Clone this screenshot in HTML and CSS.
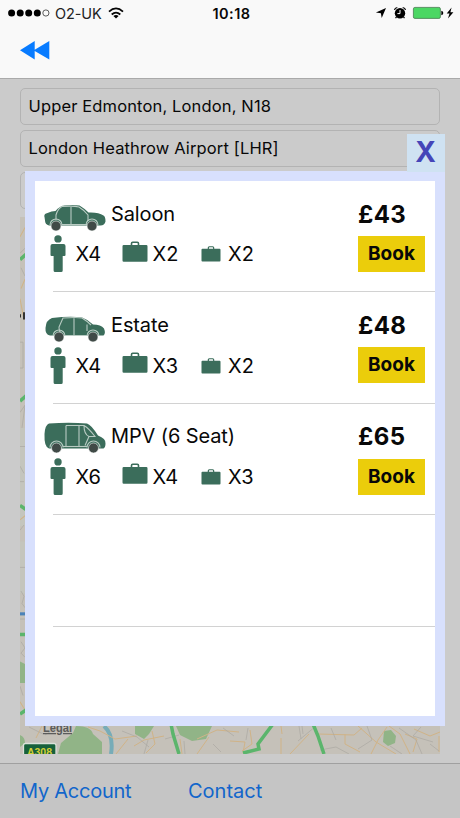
FILE: index.html
```html
<!DOCTYPE html>
<html lang="en">
<head>
<meta charset="utf-8">
<title>Choose a car</title>
<link rel="stylesheet" href="styles.css">
</head>
<body>
<svg class="defs" aria-hidden="true">
  <symbol id="person" viewBox="0 0 16 38">
    <circle cx="8" cy="3.900" r="3.700"/>
    <path d="M2.500 9h11q2 0 2 2v9q0 1-1 1h-1.800v14.500q0 1.500-1.500 1.500H5.100q-1.500 0-1.500-1.500V21H1.500q-1 0-1-1v-9q0-2 2-2z"/>
  </symbol>
  <symbol id="case" viewBox="0 0 26 23">
    <path fill-rule="evenodd" d="M1.700 5h7V3.500q0-2 2-2h4.600q2 0 2 2V5h7q1.200 0 1.200 1.200v14.300q0 1.200-1.200 1.200H1.700q-1.200 0-1.200-1.200V6.200Q.500 5 1.700 5zM10.300 5h5.400V3.600q0-.6-.6-.6h-4.200q-.6 0-.6.600z"/>
  </symbol>
</svg>
<header class="top">
  <div class="status">
    <div class="carrier">
      <svg width="42" height="10" viewBox="0 0 42 10"><g><circle cx="3.600" cy="5" r="3.500"/><circle cx="12.200" cy="5" r="3.500"/><circle cx="20.700" cy="5" r="3.500"/><circle cx="29.300" cy="5" r="3.500"/><circle cx="37.900" cy="5" r="3.100" fill="none" stroke="#333" stroke-width=".8"/></g></svg>
      <span class="network">O2-UK</span>
      <svg class="wifi" width="16" height="12" viewBox="0 0 16 12"><g fill="none" stroke="#050505" stroke-width="1.800"><path d="M1 4.600Q8-1.800 15 4.600"/><path d="M3.700 7.500Q8 3.700 12.300 7.500"/></g><path d="M5.400 9Q8 7 10.600 9L8 11.600z"/></svg>
    </div>
    <span class="time">10:18</span>
    <svg class="indicators" width="80" height="16" viewBox="375 5 80 16">
      <path d="M386 8l-4.300 10-.8-4.800-5-.8z"/>
      <circle cx="400" cy="13.300" r="5.200"/><path d="M394.500 10q.3-2 2.800-2.500M405.500 10q-.3-2-2.800-2.500M396.500 17l-1 1.200M403.500 17l1 1.200" fill="none" stroke="#050505" stroke-width="1.200"/><path d="M400 10v3.600h-2.600" fill="none" stroke="#fff" stroke-width="1"/>
      <rect x="413.400" y="7.400" width="27" height="11" rx="1.500" fill="#4bd763" stroke="#477c50" stroke-width=".8"/><path d="M441.300 10.800q2 .4 2 2.200t-2 2.200z"/>
      <path d="M451.600 7.500l-4.900 6h2.800l-1.500 5 5.400-6.300h-3z"/>
    </svg>
  </div>
  <svg class="back" width="31" height="20" viewBox="0 0 31 20"><path d="M0 10.300L14.700 1v8.700L29.300 1v18.600L14.700 10.900v8.700z" fill="#087bff"/></svg>
</header>
<main class="content">
  <div class="fields">
    <div class="field">Upper Edmonton, London, N18</div>
    <div class="field">London Heathrow Airport [LHR]</div>
    <div class="field"></div>
  </div>
  <svg class="map" width="420" height="537" viewBox="20 217 420 537">
    <rect x="20" y="217" width="420" height="537" fill="#c5c1b9"/>
    <g transform="matrix(1 0 0 1.033 0 -5.94)">
      <path d="M20 420h6v95h-6zM20 530h6v50h-6z" fill="#c4c5bd"/>
      <path d="M20 646l6 3v18h-6z" fill="#91b487"/>
      <path d="M20 235l5-9M21 285l4-9M20 295l4 20M20 509l5-4M20 685l5 8" fill="none" stroke="#d0b387"/>
      <path d="M20 251l5-5M21 265l4 8M20 337h3v25h-3M20 405l5-7-3 22M20 438h5M20 457l4 7M20 472h4M20 519l4-5M20 555h5M21 578l3 5-2 7 3 4M20 605h5M21 627l4 6-4 5 4 4M20 670l3 9" fill="none" stroke="#aaa7a2" stroke-width=".7"/>
      <path d="M20 257l6-5M20 394l6-5M20 495l6 4M20 620h6M20 697l6-4" fill="none" stroke="#5bb56c" stroke-width="3.500"/>
      <path d="M20 600h6" stroke="#4b82b9" stroke-width="3"/><path d="M23 308h3v7h-3zM20 310h1v3h-1z" fill="#333"/>
    </g>
    <path d="M20 735q5 2 5 8l-5 4zM61 743l12-10 3-7q15 0 17 8l9 8v12H58zM135 726h19l-5 8-5 5-9-5zM176 726h36l-6 13-14 2-12-6zM384 731l7-1 5 6-1 7-7 3-5-4z" fill="#91b487"/>
    <path d="M104 726q10 9 7 28" fill="none" stroke="#77acb8" stroke-width="4"/>
    <path d="M42 726l-6 12M88 727l12 4 15 8 22-3M116 754l12-15M134 746l10-6 20-4M152 731l3 13-9 9M180 739l2 15M197 739l20-9 22 2M197 754l12-17M230 741l15 1-2 11M250 730l2 14-10 7M281 754v-16M281 726l1 8M290 754l19-20M318 734l36 1 8-7M345 734v10l15 8M358 726l18 16 20 12M371 754l7-14 9-13M389 726l11 8 10 20M405 734l12 5-4 13M414 729l16 7 10-4M439 736v16" fill="none" stroke="#d0b387" stroke-width="1"/>
    <path d="M29 727l14 7M45 735l14-9M122 731l15 6 12 10M144 754l4-14M165 739l14-4M185 754l-1-13M213 744l8 8M223 728l11 8M248 728l-2 12M298 741l18-15M299 726l2 13M302 726l1 8M320 750l16-3 13 7M336 740l-5-12M367 726l5 14-14 9M390 746l12 8M399 728l17 12 6 14M421 727l-8 9 20 6M430 744l9 7" fill="none" stroke="#aaa7a2" stroke-width=".7"/>
    <path d="M171 724l2 10 6 20M273 724l-15 20 1 5-12 3-4 1M313 724l5 12 6 18" fill="none" stroke="#5bb56c" stroke-width="3.500"/>
    <text x="43" y="732" class="legal" textLength="29" lengthAdjust="spacingAndGlyphs">Legal</text>
    <rect x="23.500" y="743.500" width="32.500" height="15" rx="2" fill="#17613b" stroke="#dae1d9" stroke-width="1.300"/><text x="27" y="755.500" class="road" textLength="25" lengthAdjust="spacingAndGlyphs">A308</text>
  </svg>
</main>
<footer class="toolbar"><span class="account">My Account</span><span>Contact</span></footer>
<section class="modal">
  <div class="close">X</div>
  <div class="ride">
    <div class="details">
      <div class="vehicle">
        <svg width="62" height="28" viewBox="0 0 62 28"><path d="M.500 13q-1-3 3-4 4-2 8-2 4-5 9-5.500 8-1 15 0 5 3 9 7 10-.5 15 3 2 1 2 6-1 4-5 4H5q-4-1-4-5z"/><path class="trim" d="M12 16V11q2-7 7-9M18 2.500q11-1 17 .5 5 3 9 8v6M27 2.500V20M18 20.500h25"/><path class="trim" d="M6 21a6 6 0 0 1 12 0M42 21a6 6 0 0 1 12 0"/><circle class="wheel" cx="12" cy="22" r="5"/><circle class="wheel" cx="48" cy="22" r="5"/></svg>
        <span>Saloon</span>
      </div>
      <div class="capacity"><svg class="person"><use href="#person"/></svg><span>X4</span><svg class="case"><use href="#case"/></svg><span>X2</span><svg class="bag"><use href="#case"/></svg><span>X2</span></div>
    </div>
    <div class="offer"><div class="price">£43</div><div class="book">Book</div></div>
  </div>
  <div class="ride">
    <div class="details">
      <div class="vehicle">
        <svg width="62" height="28" viewBox="0 0 62 28"><path d="M1.500 13Q2 5 8 3q18-2 30-.5 6 2 11 7 8 0 11 4 2 5-.5 7H6q-5-1-4.500-7.500z"/><path class="trim" d="M18 19q-3-2-3-7l4-9q14-1 19 0 5 3 9 7M30 3v17M43 16V9.500M21 20.500h22"/><path class="trim" d="M9 21a6 6 0 0 1 12 0M43 21a6 6 0 0 1 12 0"/><circle class="wheel" cx="15" cy="22" r="5"/><circle class="wheel" cx="49" cy="22" r="5"/></svg>
        <span>Estate</span>
      </div>
      <div class="capacity"><svg class="person"><use href="#person"/></svg><span>X4</span><svg class="case"><use href="#case"/></svg><span>X3</span><svg class="bag"><use href="#case"/></svg><span>X2</span></div>
    </div>
    <div class="offer"><div class="price">£48</div><div class="book">Book</div></div>
  </div>
  <div class="ride">
    <div class="details">
      <div class="vehicle">
        <svg class="van" width="62" height="32" viewBox="0 0 62 32"><path d="M.500 12Q1 3 5 1.500q20-1.500 38 0 4 1 11 12 8 3 7.500 8 0 4-2 5H5Q0 25 .500 12z"/><path class="trim" d="M22 24V3.500M35 3.500V24M22 3.500h18q5 3 11 11h-6q-5-2-5-11M45 14.500l-4 9"/><path class="trim" d="M6 25.500a6.500 6.500 0 0 1 13 0M43 25.500a6.500 6.500 0 0 1 13 0"/><path class="trim" d="M19 24.500h24"/><circle class="wheel" cx="12.500" cy="26" r="5"/><circle class="wheel" cx="49.500" cy="26" r="5"/></svg>
        <span>MPV (6 Seat)</span>
      </div>
      <div class="capacity"><svg class="person"><use href="#person"/></svg><span>X6</span><svg class="case"><use href="#case"/></svg><span>X4</span><svg class="bag"><use href="#case"/></svg><span>X3</span></div>
    </div>
    <div class="offer"><div class="price">£65</div><div class="book">Book</div></div>
  </div>
  <div class="ride"></div>
</section>
</body>
</html>
```

FILE: styles.css
```css
* { box-sizing: border-box; }
body {
  margin: 0;
  width: 460px;
  height: 818px;
  display: flex;
  flex-direction: column;
  position: relative;
  overflow: hidden;
  background: #cbcbcb;
  color: #080808;
  font-family: Inter, Roboto, sans-serif;
}
svg { display: block; flex: none; }
.defs { position: absolute; width: 0; height: 0; }
.top { height: 79px; background: #f9f9f9; border-bottom: 1px solid #aaa; }
.status {
  display: grid;
  grid-template-columns: 1fr auto 1fr;
  align-items: center;
  height: 26px;
  padding: 0 5px 0 8px;
}
.carrier { display: flex; align-items: center; }
.network { margin-left: 5px; font-size: 14.5px; letter-spacing: -.1px; color: #222; }
.wifi { margin-left: 6px; }
.time { font-size: 14.5px; font-weight: 600; letter-spacing: .45px; }
.indicators { justify-self: end; }
.back { margin: 14px 0 0 20px; }
.content { height: 684px; padding: 9px 20px; }
.fields { display: grid; gap: 5px; }
.field {
  height: 37px;
  border: 1px solid #b3b3b3;
  border-radius: 5px;
  padding-left: 7.5px;
  font-size: 16.5px;
  letter-spacing: .14px;
  line-height: 35px;
}
.map { margin-top: 8px; }
.legal { font: 600 12.5px "Liberation Sans", sans-serif; fill: #5b5b5b; text-decoration: underline; }
.road { font: 700 11px "Liberation Sans", sans-serif; fill: #d3cf35; }
.toolbar {
  height: 55px;
  border-top: 1px solid #a0a0a0;
  background: #c5c5c5;
  display: grid;
  grid-template-columns: 168px auto;
  padding-left: 20px;
  line-height: 54px;
  font-size: 20px;
  color: #1266cb;
}
.account { letter-spacing: -.25px; }
.modal {
  position: absolute;
  left: 25px;
  top: 171px;
  width: 420px;
  height: 555px;
  border: 10px solid #d8e0fd;
  background: #fff;
}
.close {
  position: absolute;
  top: -47px;
  right: -10px;
  width: 38px;
  height: 38px;
  background: #cfe2f2;
  color: #4545b8;
  font: 700 28px/37px Inter, sans-serif;
  text-align: center;
  padding-right: 1px;
}
.ride {
  height: 111.4px;
  display: flex;
  justify-content: space-between;
  padding: 17.700px 10px 0 9px;
  background: linear-gradient(#d2d2d2, #d2d2d2) 18px 100% / 382px 1px no-repeat;
}
.vehicle { display: flex; height: 30px; align-items: center; gap: 5px; font-size: 20px; letter-spacing: -.12px; }
.vehicle svg { margin-top: 8px; fill: #3b6d5b; }
.vehicle .van { margin-top: 3px; }
.trim { fill: none; stroke: #b9cbc3; stroke-width: 1.1; }
.wheel { fill: #404a47; stroke: #f7faf8; stroke-width: .6; }
.capacity {
  display: grid;
  grid-template-columns: 31.5px 46px 31px 48.5px 27px auto;
  height: 51px;
  align-items: center;
  font-size: 20px;
}
.capacity svg { fill: #3b6d5b; }
.person { width: 16px; height: 38px; margin-left: 6px; }
.case { width: 26px; height: 23px; margin-top: -6px; }
.bag { width: 20px; height: 17.5px; }
.offer { width: 67px; }
.price { height: 37.200px; font-size: 24px; line-height: 31px; font-weight: 700; letter-spacing: .4px; }
.book { height: 36px; background: #ebcd0b; font-size: 19px; line-height: 35px; font-weight: 700; text-align: center; }
```
